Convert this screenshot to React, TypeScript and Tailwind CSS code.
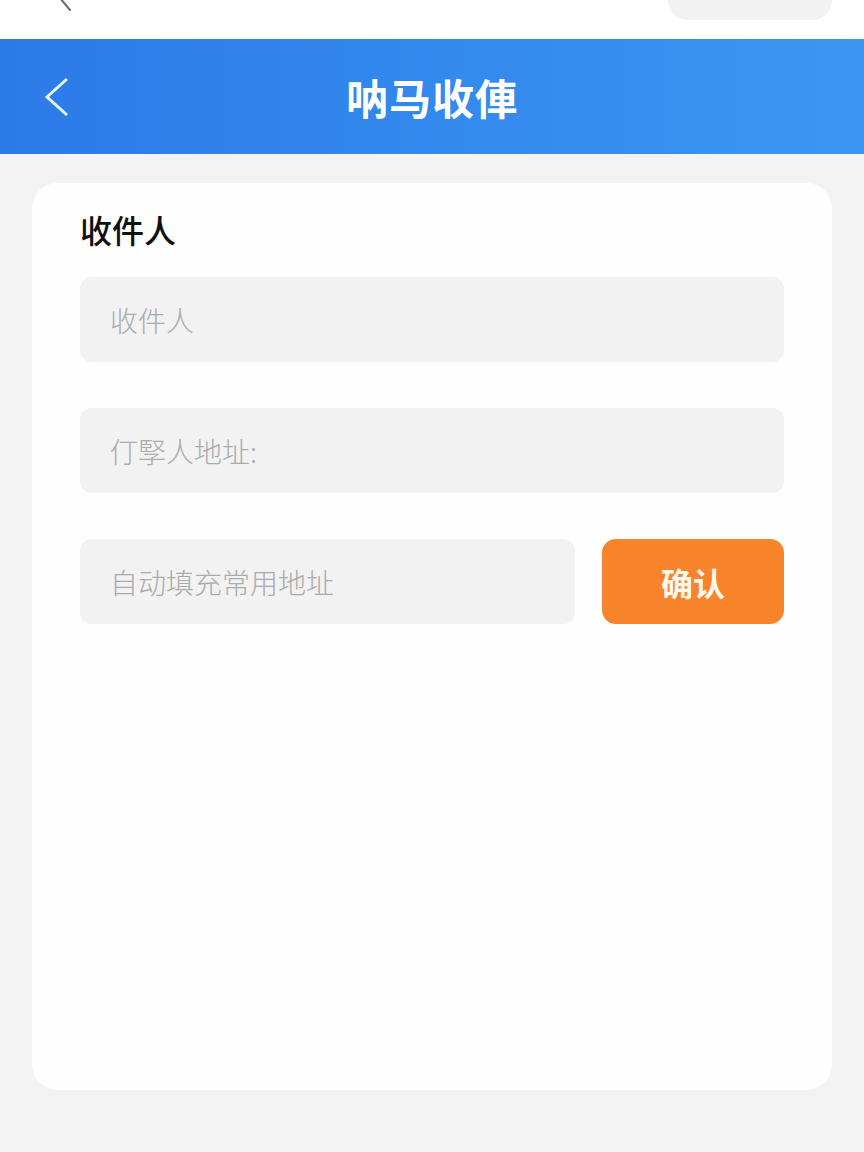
const cjk = "font-['Noto_Sans_CJK_SC','Noto_Sans',sans-serif]";

function Field({ placeholder, className = "" }: { placeholder: string; className?: string }) {
  return (
    <div className={`flex h-[85px] items-center rounded-xl bg-[#f2f2f2] pl-[30px] ${className}`}>
      <span className="text-[28px] font-light text-[#ababab]">{placeholder}</span>
    </div>
  );
}

export default function App() {
  return (
    <div className={`flex min-h-[1152px] w-[864px] flex-col bg-[#f3f3f3] ${cjk}`}>
      {/* status bar fragment */}
      <div className="relative h-[39px] bg-white">
        <svg className="absolute left-[58px] top-0" width="16" height="12" viewBox="0 0 16 12">
          <path d="M2 -2 L12 10" stroke="#6b6b6b" strokeWidth="2" fill="none" strokeLinecap="round" />
        </svg>
        <div className="absolute right-[32px] top-[-20px] h-[40px] w-[164px] rounded-[20px] bg-[#f2f2f2]" />
      </div>

      <header className="relative flex h-[115px] items-center justify-center bg-gradient-to-r from-[#2c7ae8] to-[#3b97f1]">
        <svg className="absolute left-[43px] top-[37px]" width="28" height="42" viewBox="0 0 28 42">
          <path d="M24 3 L4 21 L24 39" stroke="#e6f7ff" strokeWidth="3" fill="none" strokeLinejoin="miter" />
        </svg>
        <h1 className="text-[42px] font-bold tracking-[1px] text-white">呐马收俥</h1>
      </header>

      <div className="px-[32px] pt-[29px] pb-[62px]">
        <div className="flex h-[907px] flex-col rounded-[26px] bg-[#fefefe] px-[48px] pt-[25px]">
          <h2 className="text-[32px] font-medium leading-[42px] text-[#111]">收件人</h2>
          <Field placeholder="收件人" className="mt-[27px]" />
          <Field placeholder="仃孯人地址:" className="mt-[46px]" />
          <div className="mt-[46px] flex gap-[27px]">
            <Field placeholder="自动填充常用地址" className="flex-1" />
            <button
              type="button"
              className="flex h-[85px] w-[182px] items-center justify-center rounded-[14px] bg-[#f7832b] text-[32px] font-bold text-[#fff8ee]"
            >
              确认
            </button>
          </div>
        </div>
      </div>
    </div>
  );
}
